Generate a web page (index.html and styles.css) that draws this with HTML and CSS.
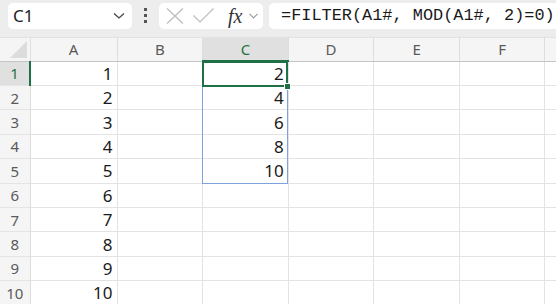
FILE: index.html
```html
<!DOCTYPE html>
<html lang="en">
<head>
    <meta charset="UTF-8">
    <title>Sheet1</title>
    <link rel="stylesheet" href="styles.css">
</head>
<body>

    <div class="toolbar">
        <div class="namebox">
            <span>C1</span>
            <svg width="12" height="6" viewBox="0 0 12 6"><path d="M1 0.5 L6 5 L11 0.5" fill="none" stroke="#444" stroke-width="1.3"/></svg>
        </div>
        <div class="grip">
            <span></span><span></span><span></span>
        </div>
        <div class="fbuttons">
            <svg class="cancel" width="18" height="16" viewBox="0 0 18 16"><path d="M1 0.5 L17 15.5 M17 0.5 L1 15.5" stroke="#bdbdbd" stroke-width="1.2" fill="none"/></svg>
            <svg class="enter" width="21" height="15" viewBox="0 0 21 15"><path d="M0.5 7.5 L7 14 L20.5 0.5" stroke="#bdbdbd" stroke-width="1.2" fill="none"/></svg>
            <span class="fx">fx</span>
            <svg width="9" height="6" viewBox="0 0 9 6"><path d="M0.5 0.8 L4.5 5 L8.5 0.8" fill="none" stroke="#9a9a9a" stroke-width="1.1"/></svg>
        </div>
        <div class="formula">=FILTER(A1#, MOD(A1#, 2)=0)</div>
    </div>

    <div class="sheet">
        <table>
            <colgroup>
                <col class="rh"><col class="ca"><col><col><col><col><col><col><col>
            </colgroup>
            <tr class="head">
                <th class="corner"><i></i></th><th>A</th><th>B</th><th class="cur">C</th><th>D</th><th>E</th><th>F</th><th></th><th></th>
            </tr>
            <tr><th class="cur">1</th><td>1</td><td></td><td>2</td><td></td><td></td><td></td><td></td><td></td></tr>
            <tr><th>2</th><td>2</td><td></td><td>4</td><td></td><td></td><td></td><td></td><td></td></tr>
            <tr><th>3</th><td>3</td><td></td><td>6</td><td></td><td></td><td></td><td></td><td></td></tr>
            <tr><th>4</th><td>4</td><td></td><td>8</td><td></td><td></td><td></td><td></td><td></td></tr>
            <tr><th>5</th><td>5</td><td></td><td>10</td><td></td><td></td><td></td><td></td><td></td></tr>
            <tr><th>6</th><td>6</td><td></td><td></td><td></td><td></td><td></td><td></td><td></td></tr>
            <tr><th>7</th><td>7</td><td></td><td></td><td></td><td></td><td></td><td></td><td></td></tr>
            <tr><th>8</th><td>8</td><td></td><td></td><td></td><td></td><td></td><td></td><td></td></tr>
            <tr><th>9</th><td>9</td><td></td><td></td><td></td><td></td><td></td><td></td><td></td></tr>
            <tr><th>10</th><td>10</td><td></td><td></td><td></td><td></td><td></td><td></td><td></td></tr>
        </table>
        <div class="spill"></div>
        <div class="active"><span class="handle"></span></div>
    </div>

</body>
</html>
```

FILE: styles.css
```css
* {
    box-sizing: border-box;
}

html, body {
    margin: 0;
    padding: 0;
    width: 556px;
    height: 304px;
    overflow: hidden;
    background-color: #ffffff;
    font-family: "Noto Sans", Arial, sans-serif;
}

.toolbar {
    display: flex;
    align-items: center;
    height: 38px;
    padding: 0 0 6px 8px;
    background-color: #ededed;
    border-bottom: 1px solid #e2e2e2;
    overflow: hidden;
}

.namebox {
    display: flex;
    align-items: center;
    justify-content: space-between;
    flex-shrink: 0;
    width: 124px;
    height: 26px;
    padding: 0 7px 0 5px;
    background-color: #ffffff;
    border-radius: 5px;
    font-size: 17px;
    color: #222;
}

.grip {
    display: flex;
    flex-direction: column;
    flex-shrink: 0;
    gap: 3px;
    width: 27px;
    align-items: center;
}

.grip span {
    width: 3px;
    height: 3px;
    background-color: #555;
}

.fbuttons {
    display: flex;
    align-items: center;
    flex-shrink: 0;
    width: 104px;
    height: 26px;
    padding-left: 7px;
    background-color: #ffffff;
    border-radius: 5px;
}

.fbuttons .enter {
    margin-left: 9px;
}

.fx {
    margin-left: 14px;
    margin-right: 7px;
    font-family: "Liberation Serif", serif;
    font-style: italic;
    font-size: 20px;
    color: #333;
    line-height: 1;
}

.formula {
    flex: 1;
    height: 26px;
    margin-left: 6px;
    padding-left: 12px;
    background-color: #ffffff;
    border-radius: 5px 0 0 5px;
    font-family: "Liberation Mono", monospace;
    font-size: 16.9px;
    line-height: 26px;
    color: #1a1a1a;
    white-space: nowrap;
    overflow: hidden;
}

.sheet {
    position: relative;
    overflow: hidden;
}

table {
    border-collapse: collapse;
    table-layout: fixed;
    width: 716px;
}

col {
    width: 85.6px;
}

col.rh {
    width: 30px;
}

col.ca {
    width: 87px;
}

tr {
    height: 24.4px;
}

tr.head {
    height: 23px;
}

th {
    padding: 0;
    font-weight: normal;
    font-size: 15px;
    color: #5a5a5a;
    background-color: #f5f5f5;
    text-align: center;
    border-right: 1px solid #dcdcdc;
    border-bottom: 1px solid #e4e4e4;
}

tr.head th {
    border-bottom: 1px solid #c4c4c4;
    border-right: 1px solid #dedede;
}

th.corner {
    position: relative;
}

th.corner i {
    position: absolute;
    right: 3px;
    bottom: 3px;
    width: 0;
    height: 0;
    border-left: 17px solid transparent;
    border-bottom: 17px solid #dcdcdc;
}

th.cur {
    background-color: #e0e0e0;
    color: #1e7145;
}

tr.head th.cur {
    border-bottom: 2px solid #1e7145;
}

tr th.cur:first-child {
    border-right: 2px solid #1e7145;
}

td {
    padding: 0 4px;
    font-size: 17px;
    color: #1a1a1a;
    text-align: right;
    border-right: 1px solid #e3e3e3;
    border-bottom: 1px solid #e3e3e3;
    white-space: nowrap;
}

.spill {
    position: absolute;
    left: 202px;
    top: 23px;
    width: 86px;
    height: 123px;
    border: 1px solid #7ea3dc;
}

.active {
    position: absolute;
    left: 202px;
    top: 23px;
    width: 86px;
    height: 26px;
    border: 2px solid #1e7145;
}

.handle {
    position: absolute;
    right: -5px;
    bottom: -5px;
    width: 7px;
    height: 7px;
    background-color: #1e7145;
    border: 1px solid #ffffff;
}
```
